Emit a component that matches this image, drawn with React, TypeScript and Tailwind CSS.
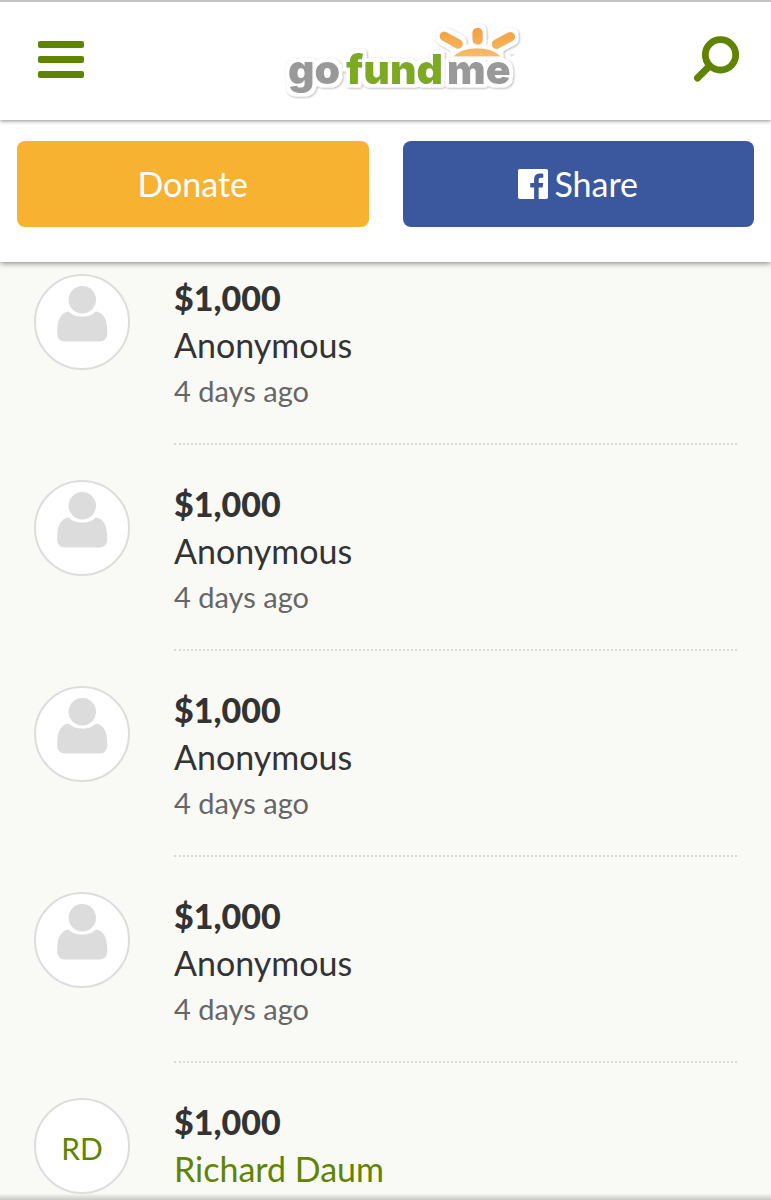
type Donation = {
  id: number;
  amount: string;
  name: string;
  time?: string;
  initials?: string;
};

const donations: Donation[] = [
  { id: 1, amount: "$1,000", name: "Anonymous", time: "4 days ago" },
  { id: 2, amount: "$1,000", name: "Anonymous", time: "4 days ago" },
  { id: 3, amount: "$1,000", name: "Anonymous", time: "4 days ago" },
  { id: 4, amount: "$1,000", name: "Anonymous", time: "4 days ago" },
  { id: 5, amount: "$1,000", name: "Richard Daum", initials: "RD" },
];

function MenuIcon() {
  return (
    <svg width="46" height="37" viewBox="0 0 46 37" fill="#5f8400" aria-hidden="true">
      <rect width="46" height="7" rx="2" />
      <rect y="15" width="46" height="7" rx="2" />
      <rect y="30" width="46" height="7" rx="2" />
    </svg>
  );
}

function SearchIcon() {
  return (
    <svg width="46" height="46" viewBox="0 0 46 46" fill="none" stroke="#5f8400" aria-hidden="true">
      <circle cx="27.5" cy="18.8" r="15.200" strokeWidth="6.8" />
      <path d="M16.500 30 4.500 42" strokeWidth="7" strokeLinecap="round" />
    </svg>
  );
}

function Logo() {
  return (
    <svg width="266" height="80" viewBox="256 19 266 80" role="img" aria-label="gofundme">
      <defs>
        <linearGradient id="sun" gradientUnits="userSpaceOnUse" x1="0" y1="28" x2="0" y2="57">
          <stop offset="0" stopColor="#f2a03f" />
          <stop offset="1" stopColor="#fabb68" />
        </linearGradient>
        <filter id="sticker" filterUnits="userSpaceOnUse" x="256" y="19" width="266" height="80">
          <feMorphology in="SourceAlpha" operator="dilate" radius="3" result="wide" />
          <feGaussianBlur in="wide" stdDeviation="1" result="soft" />
          <feComponentTransfer in="soft" result="outline">
            <feFuncR type="linear" slope="0" intercept="1" />
            <feFuncG type="linear" slope="0" intercept="1" />
            <feFuncB type="linear" slope="0" intercept="1" />
            <feFuncA type="linear" slope="3" intercept="-0.5" />
          </feComponentTransfer>
          <feDropShadow in="outline" dx="0.8" dy="0.8" stdDeviation="0.8" floodColor="#000" floodOpacity="0.35" result="edge" />
          <feMerge>
            <feMergeNode in="edge" />
            <feMergeNode in="SourceGraphic" />
          </feMerge>
        </filter>
      </defs>
      <g filter="url(#sticker)">
        <g fill="none" stroke="url(#sun)" strokeLinecap="round">
          <path d="M453.500 56.500C463 45.500 491 45.500 500.500 56.500Z" fill="url(#sun)" stroke="none" />
          <path d="M444.300 36.300 458.200 44" strokeWidth="9.500" />
          <path d="M477.500 33 477.600 39.500" strokeWidth="10.500" />
          <path d="M510.300 36.800 496.300 44.300" strokeWidth="9.500" />
        </g>
        <g className="font-['Inter',sans-serif] text-[41px] font-black">
          <text x="288" y="84" fill="#999999">go</text>
          <text x="346" y="84" fill="#7eaa22">fund</text>
          <text x="447" y="84" fill="#999999">me</text>
        </g>
      </g>
      <text x="509" y="59" fill="#ecc4b4" className="font-['Lato',sans-serif] text-[7px]">™</text>
    </svg>
  );
}

function FacebookIcon() {
  return (
    <svg width="30" height="30" viewBox="0 0 30 30" aria-hidden="true">
      <path
        fill="currentColor"
        d="M1.700 0H28.300A1.700 1.700 0 0 1 30 1.700V28.300A1.700 1.700 0 0 1 28.300 30H20.700V18.400H24.600L25.200 13.900H20.700V11C20.700 9.700 21.100 8.800 23 8.800H25.300V4.800C24.900 4.700 23.500 4.600 21.900 4.600C18.400 4.600 16.100 6.700 16.100 10.500V13.900H12.200V18.400H16.100V30H1.700A1.700 1.700 0 0 1 0 28.300V1.700A1.700 1.700 0 0 1 1.700 0Z"
      />
    </svg>
  );
}

function PersonIcon() {
  return (
    <svg width="52" height="56" viewBox="0 0 52 56" fill="#dcdcdc" aria-hidden="true">
      <circle cx="26.300" cy="13.700" r="13.700" />
      <path d="M12.500 25.600C16.500 29.500 21 30.600 26.300 30.600S36 29.500 40 25.600C48 27 51.300 34 51.300 46C51.300 52 49 55.500 43.500 55.500H9C3.500 55.500 1.200 52 1.200 46C1.200 34 4.500 27 12.500 25.600Z" />
    </svg>
  );
}

function DonationRow({ amount, name, time, initials }: Donation) {
  return (
    <li className="flex gap-11">
      <div className="flex size-24 shrink-0 justify-center rounded-full border-2 border-[#dddddd] bg-white">
        {initials ? (
          <span className="self-center pt-1 text-[30px] leading-9 text-[#5f8400]">{initials}</span>
        ) : (
          <span className="pt-[10px]">
            <PersonIcon />
          </span>
        )}
      </div>
      <div className="mb-[35px] grow border-b-2 border-dotted border-[#d8d8d4] pb-[29px]">
        <p className="text-[34px] leading-[48px] font-black">{amount}</p>
        {initials ? (
          <a href="#donor" className="block text-[34px] leading-[46px] text-[#5f8400]">
            {name}
          </a>
        ) : (
          <p className="text-[34px] leading-[46px]">{name}</p>
        )}
        {time && <p className="text-[29px] leading-[46px] text-[#666666]">{time}</p>}
      </div>
    </li>
  );
}

export default function App() {
  return (
    <div className="flex h-screen flex-col overflow-hidden bg-[#f9faf6] font-['Lato',sans-serif] text-[#333333]">
      <header className="relative z-20 flex h-[120px] shrink-0 items-center justify-between border-t-2 border-[#c4c4c4] bg-white pr-8 pb-1 pl-[38px] shadow-[0_1px_4px_rgba(0,0,0,0.45)]">
        <button type="button" aria-label="Menu">
          <MenuIcon />
        </button>
        <a href="#home">
          <Logo />
        </a>
        <button type="button" aria-label="Search">
          <SearchIcon />
        </button>
      </header>
      <div className="relative z-10 grid shrink-0 grid-cols-2 gap-[34px] bg-white px-[17px] pt-[21px] pb-[35px] text-[34px] leading-[86px] text-white shadow-[0_1px_6px_rgba(0,0,0,0.5)]">
        <button type="button" className="rounded-lg bg-[#f7b232]">
          Donate
        </button>
        <button type="button" className="flex items-center justify-center gap-[6px] rounded-lg bg-[#3b589e]">
          <FacebookIcon />
          Share
        </button>
      </div>
      <main className="min-h-0 grow overflow-hidden">
        <ul className="px-[34px] pt-3">
          {donations.map((donation) => (
            <DonationRow key={donation.id} {...donation} />
          ))}
        </ul>
      </main>
      <div className="h-[6px] shrink-0 bg-linear-to-b from-[#f4f5f1] to-[#c8c8c5]" />
    </div>
  );
}
